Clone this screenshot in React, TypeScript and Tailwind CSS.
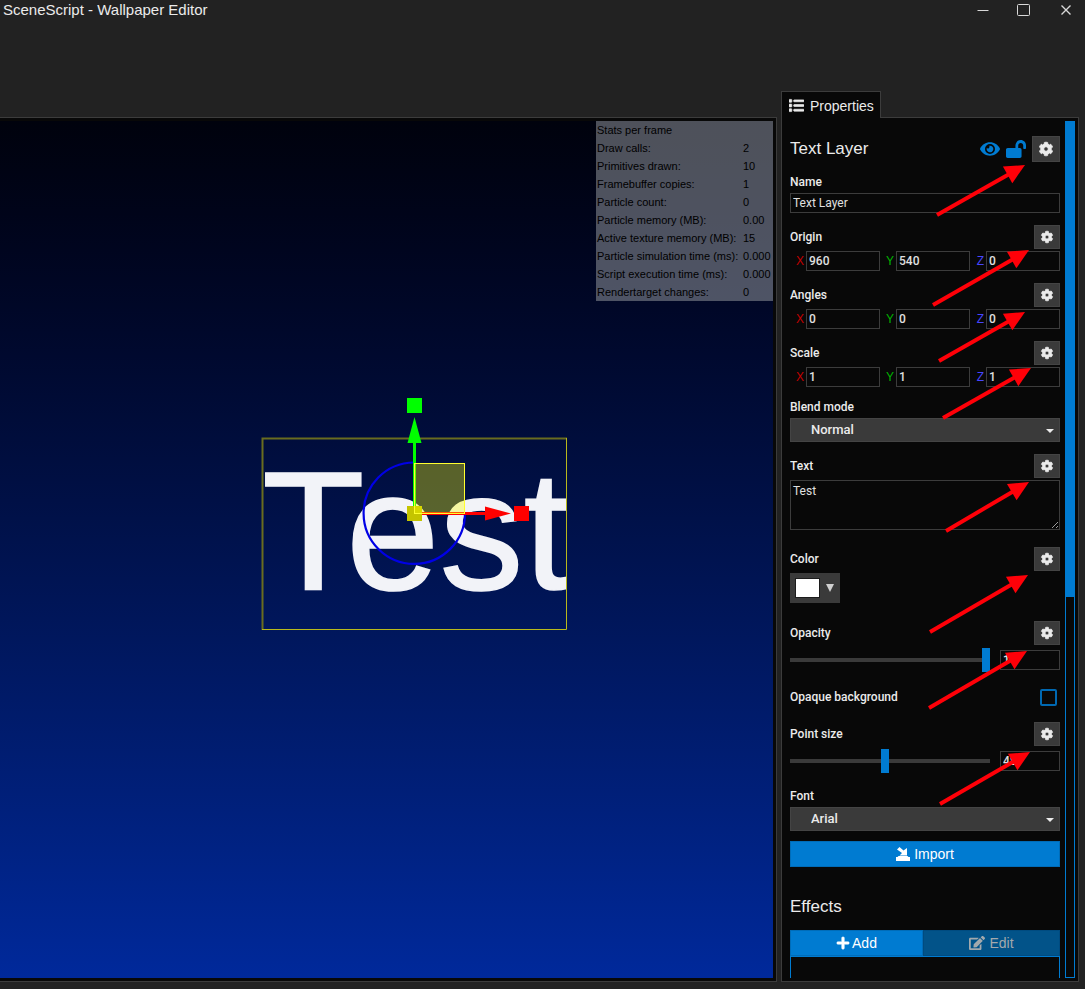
import React, { useState } from "react";
import { FaCog, FaEdit, FaEye, FaList, FaLockOpen, FaPlus } from "react-icons/fa";

const stats: [string, string][] = [
  ["Draw calls:", "2"],
  ["Primitives drawn:", "10"],
  ["Framebuffer copies:", "1"],
  ["Particle count:", "0"],
  ["Particle memory (MB):", "0.00"],
  ["Active texture memory (MB):", "15"],
  ["Particle simulation time (ms):", "0.000"],
  ["Script execution time (ms):", "0.000"],
  ["Rendertarget changes:", "0"],
];

const arrows = [
  [156, 98, 244, 48],
  [152, 188, 248, 133],
  [158, 244, 244, 195],
  [162, 301, 250, 251],
  [165, 414, 248, 365],
  [149, 515, 247, 458],
  [148, 591, 246, 534],
  [159, 687, 249, 635],
];

const field =
  "h-5 min-w-0 border border-[#3c3c3c] bg-[#080808] px-0.5 text-xs text-[#e0e0e0] outline-none";

function Arrow({ line }: { line: number[] }) {
  const [x1, y1, x2, y2] = line;
  const length = Math.hypot(x2 - x1, y2 - y1);
  const ux = (x2 - x1) / length;
  const uy = (y2 - y1) / length;
  const bx = x2 - ux * 20;
  const by = y2 - uy * 20;
  return (
    <g fill="#ff0008" stroke="#ff0008">
      <line x1={x1} y1={y1} x2={bx + ux} y2={by + uy} strokeWidth="4" />
      <polygon
        stroke="none"
        points={`${x2},${y2} ${bx - uy * 9.5},${by + ux * 9.5} ${bx + uy * 9.5},${by - ux * 9.5}`}
      />
    </g>
  );
}

function GearButton({ label, large }: { label: string; large?: boolean }) {
  return (
    <button
      type="button"
      aria-label={label}
      className={`flex items-center justify-center border border-[#444444] bg-[#3a3a3a] text-[#ebebeb] ${
        large ? "h-[26px] w-7 text-sm" : "h-6 w-[26px] text-xs"
      }`}
    >
      <FaCog className="overflow-visible stroke-current [stroke-width:32]" />
    </button>
  );
}

function PropertyHeader({ label, htmlFor }: { label: string; htmlFor?: string }) {
  return (
    <div className="flex h-6 items-center justify-between">
      {htmlFor ? (
        <label htmlFor={htmlFor}>{label}</label>
      ) : (
        <span>{label}</span>
      )}
      <GearButton label={`${label} options`} />
    </div>
  );
}

function Vector({ label, values }: { label: string; values: string[] }) {
  const axes = [
    ["X", "text-[#c40000]"],
    ["Y", "text-[#00b400]"],
    ["Z", "text-[#4646ff]"],
  ];
  return (
    <div role="group" aria-label={label} className="mt-3">
      <PropertyHeader label={label} />
      <div className="mt-0.5 grid grid-cols-3">
        {axes.map(([axis, color], i) => (
          <label key={axis} className="flex items-center font-['Liberation_Sans',Arial,sans-serif] font-normal">
            <span className={`w-4 pr-0.5 text-right ${color}`}>{axis}</span>
            <input className={`${field} flex-1 font-['Roboto',Arial,sans-serif] font-medium`} defaultValue={values[i]} />
          </label>
        ))}
      </div>
    </div>
  );
}

function Dropdown({ id, label, value }: { id: string; label: string; value: string }) {
  return (
    <>
      <label htmlFor={id} className="block leading-4">
        {label}
      </label>
      <div className="relative mt-[3px]">
        <select
          id={id}
          className="h-6 w-full appearance-none border border-[#444444] bg-[#3a3a3a] pb-px pl-5 text-[13px] text-[#ebebeb] outline-none"
        >
          <option>{value}</option>
        </select>
        <svg
          viewBox="0 0 8 4"
          className="pointer-events-none absolute top-[11px] right-1.5 h-1 w-2 fill-[#ebebeb]"
        >
          <path d="M0 0h8L4 4z" />
        </svg>
      </div>
    </>
  );
}

function Slider({ label, id, start, max }: { label: string; id: string; start: number; max: number }) {
  const [value, setValue] = useState(start);
  return (
    <>
      <PropertyHeader label={label} htmlFor={id} />
      <div className="mt-1 flex h-[22px] items-center gap-2.5">
        <input
          id={id}
          type="range"
          min="0"
          max={max}
          step="any"
          value={value}
          onChange={(e) => setValue(Number(e.target.value))}
          className="h-6 min-w-0 flex-1 appearance-none bg-transparent [&::-webkit-slider-runnable-track]:h-1 [&::-webkit-slider-runnable-track]:bg-[#3a3a3a] [&::-webkit-slider-thumb]:-mt-2.5 [&::-webkit-slider-thumb]:h-6 [&::-webkit-slider-thumb]:w-2 [&::-webkit-slider-thumb]:appearance-none [&::-webkit-slider-thumb]:bg-[#007bd1]"
        />
        <input
          aria-label={`${label} value`}
          value={value}
          onChange={(e) => setValue(Number(e.target.value))}
          className={`${field} w-[60px] font-medium`}
        />
      </div>
    </>
  );
}

function Scene() {
  return (
    <svg width="773" height="857" className="absolute top-0 left-0" viewBox="0 121 773 857">
      <defs>
        <clipPath id="layer">
          <rect x="262" y="438" width="304" height="192" />
        </clipPath>
      </defs>
      <text
        x="262"
        y="589"
        fontSize="168"
        fill="#f2f3f8"
        stroke="#f2f3f8"
        strokeWidth="1.5"
        fontFamily="Liberation Sans, Arial, sans-serif"
        clipPath="url(#layer)"
      >
        Test
      </text>
      <path d="M262.5 630V438.5H567" fill="none" stroke="#696c1f" strokeWidth="2" />
      <path d="M566.5 438V629.5H262" fill="none" stroke="#b9b91c" />
      <path d="M414 462.5A50.7 50.7 0 1 0 465 513" fill="none" stroke="#0000e6" strokeWidth="2.2" />
      <path d="M414.5 506V441" stroke="#00ff00" strokeWidth="3" />
      <path d="M421 513.5H486" stroke="#ff0000" strokeWidth="3" />
      <rect x="407" y="506" width="15" height="15" fill="#c4c400" />
      <rect x="414.5" y="463.5" width="50" height="50" fill="#ffff00" fillOpacity="0.35" stroke="#ffff30" />
      <path d="M414.5 417l7 26h-14z" fill="#00ff00" />
      <rect x="407" y="398" width="15" height="15" fill="#00ff00" />
      <path d="M511 513.5l-26 7v-14z" fill="#ff0000" />
      <rect x="514" y="506" width="15" height="15" fill="#ff0000" />
    </svg>
  );
}

export default function App() {
  return (
    <div className="flex h-screen flex-col overflow-hidden bg-[#222222] pr-1.5 pb-[7px] font-['Liberation_Sans',Arial,sans-serif] text-[#ebebeb]">
      <header className="flex h-5 shrink-0 items-center justify-between pl-[3px]">
        <h1 className="text-[15px] leading-5">SceneScript - Wallpaper Editor</h1>
        <div className="flex">
          <button type="button" aria-label="Minimize" className="flex h-5 w-10 items-center justify-center">
            <svg viewBox="0 0 14 14" className="size-3.5 stroke-[#d8d8d8]"><path d="M1.5 7.5h11" /></svg>
          </button>
          <button type="button" aria-label="Maximize" className="flex h-5 w-10 items-center justify-center">
            <svg viewBox="0 0 14 14" className="size-3.5 fill-none stroke-[#d8d8d8]"><rect x="1.5" y="1.5" width="12" height="11" rx="1" /></svg>
          </button>
          <button type="button" aria-label="Close" className="flex h-5 w-9 items-center justify-end pr-1.5">
            <svg viewBox="0 0 14 14" className="size-3.5 stroke-[#d8d8d8] [stroke-width:1.4]"><path d="M2.5 2.5l9 9m0-9l-9 9" /></svg>
          </button>
        </div>
      </header>

      <div className="mt-[71px] flex min-h-0 flex-1 gap-1">
        <main className="mt-[26px] flex min-w-0 flex-1 border-y border-r border-[#3c3c3c] bg-[#080808] py-[3px] pr-[3px]">
          <div className="relative min-w-0 flex-1 overflow-hidden bg-linear-to-b from-[#00020d] to-[#00299b]">
            <Scene />
            <table className="absolute top-0 right-0 w-[177px] bg-[#8a8e96]/57 text-left text-[11px] leading-[18px] text-black">
              <thead>
                <tr>
                  <th colSpan={2} className="py-0 pl-px font-normal">Stats per frame</th>
                </tr>
              </thead>
              <tbody>
                {stats.map(([name, value]) => (
                  <tr key={name}>
                    <td className="py-0 pl-px whitespace-nowrap">{name}</td>
                    <td className="w-[30px] py-0">{value}</td>
                  </tr>
                ))}
              </tbody>
            </table>
          </div>
        </main>

        <aside className="flex w-[298px] shrink-0 flex-col">
          <button
            type="button"
            className="z-10 -mb-px flex h-[27px] w-[100px] shrink-0 items-center gap-1.5 border border-b-0 border-[#3c3c3c] bg-[#080808] pt-px pl-[7px] text-sm"
          >
            <FaList className="size-[15px] stroke-current [stroke-width:24]" />
            Properties
          </button>
          <section className="relative flex min-h-0 flex-1 border border-[#3c3c3c] bg-[#080808] py-[3px] pr-[3px] pl-2">
            <div className="min-h-0 min-w-0 flex-1 overflow-hidden pt-[15px] font-['Roboto',Arial,sans-serif] text-xs font-medium">
              <div className="flex h-[26px] items-center">
                <h2 className="flex-1 font-['Liberation_Sans',Arial,sans-serif] text-[17px] leading-[26px] font-normal">Text Layer</h2>
                <button type="button" aria-label="Toggle visibility" className="text-[#007bd1]">
                  <FaEye className="h-[18px] w-5" />
                </button>
                <button type="button" aria-label="Toggle lock" className="mx-1.5 text-[#007bd1]">
                  <FaLockOpen className="h-[18px] w-5" />
                </button>
                <GearButton label="Layer options" large />
              </div>

              <label htmlFor="name" className="mt-3 block leading-4">Name</label>
              <input id="name" className={`${field} mt-[3px] block w-full font-normal`} defaultValue="Text Layer" />

              <Vector label="Origin" values={["960", "540", "0"]} />
              <Vector label="Angles" values={["0", "0", "0"]} />
              <Vector label="Scale" values={["1", "1", "1"]} />

              <div className="mt-3">
                <Dropdown id="blend" label="Blend mode" value="Normal" />
              </div>

              <div className="mt-3">
                <PropertyHeader label="Text" htmlFor="text" />
                <textarea
                  id="text"
                  defaultValue="Test"
                  className="mt-0.5 block h-[50px] w-full resize border border-[#3c3c3c] bg-[#080808] px-0.5 py-0.5 text-xs font-normal text-[#e0e0e0] outline-none"
                />
              </div>

              <div className="mt-[17px]">
                <PropertyHeader label="Color" />
                <button
                  type="button"
                  aria-label="Choose color"
                  className="mt-0.5 flex h-[30px] w-[50px] items-center gap-1.5 bg-[#3a3a3a] pl-[5px]"
                >
                  <span className="h-5 w-[25px] border border-[#1c1c1c] bg-white" />
                  <svg viewBox="0 0 8 8" className="size-2 fill-[#d0d0d0]"><path d="M0 0h8L4 8z" /></svg>
                </button>
              </div>

              <div className="mt-[18px]">
                <Slider id="opacity" label="Opacity" start={1} max={1} />
              </div>

              <div className="mt-[17px] flex h-[18px] items-center justify-between pr-[3px]">
                <label htmlFor="opaque">Opaque background</label>
                <input
                  id="opaque"
                  type="checkbox"
                  className="size-[17px] appearance-none rounded-xs border-2 border-[#0068b1] checked:bg-[#007bd1]"
                />
              </div>

              <div className="mt-4">
                <Slider id="size" label="Point size" start={48} max={101} />
              </div>

              <div className="mt-4">
                <Dropdown id="font" label="Font" value="Arial" />
              </div>

              <button
                type="button"
                className="mt-2.5 flex h-[26px] w-full items-center justify-center gap-1 border border-[#006cb8] bg-[#007bd1] font-['Liberation_Sans',Arial,sans-serif] text-sm font-normal text-white"
              >
                <svg viewBox="0 0 14 14" className="size-3.5 fill-current">
                  <path d="M0 10h1.500l1-1h9l1 1H14v4H0zM1 2.500L3.500 0l4 3.500L11 1v7.500H3.500L6 6z" />
                </svg>
                Import
              </button>

              <h2 className="mt-7 font-['Liberation_Sans',Arial,sans-serif] text-[17px] leading-6 font-normal">Effects</h2>
              <div className="mt-[11px] flex font-['Liberation_Sans',Arial,sans-serif] text-sm font-normal">
                <button type="button" className="flex h-[26px] w-[133px] items-center justify-center gap-0.5 border border-[#006cb8] bg-[#007bd1] text-white">
                  <FaPlus className="stroke-current [stroke-width:16]" /> Add
                </button>
                <button type="button" disabled className="flex h-[26px] flex-1 items-center justify-center gap-1 border border-[#004b80] bg-[#025389] text-[#a3a9ad]">
                  <FaEdit className="size-4" /> Edit
                </button>
              </div>
              <div className="h-24 border border-[#007bd1]" />
            </div>

            <div className="ml-[5px] w-2.5 border border-[#007bd1]">
              <div className="h-[475px] bg-[#007bd1]" />
            </div>

            <svg
              width="298"
              height="865"
              className="pointer-events-none absolute -top-px -left-px"
              aria-hidden="true"
            >
              {arrows.map((line) => (
                <Arrow key={line[1]} line={line} />
              ))}
            </svg>
          </section>
        </aside>
      </div>
    </div>
  );
}
